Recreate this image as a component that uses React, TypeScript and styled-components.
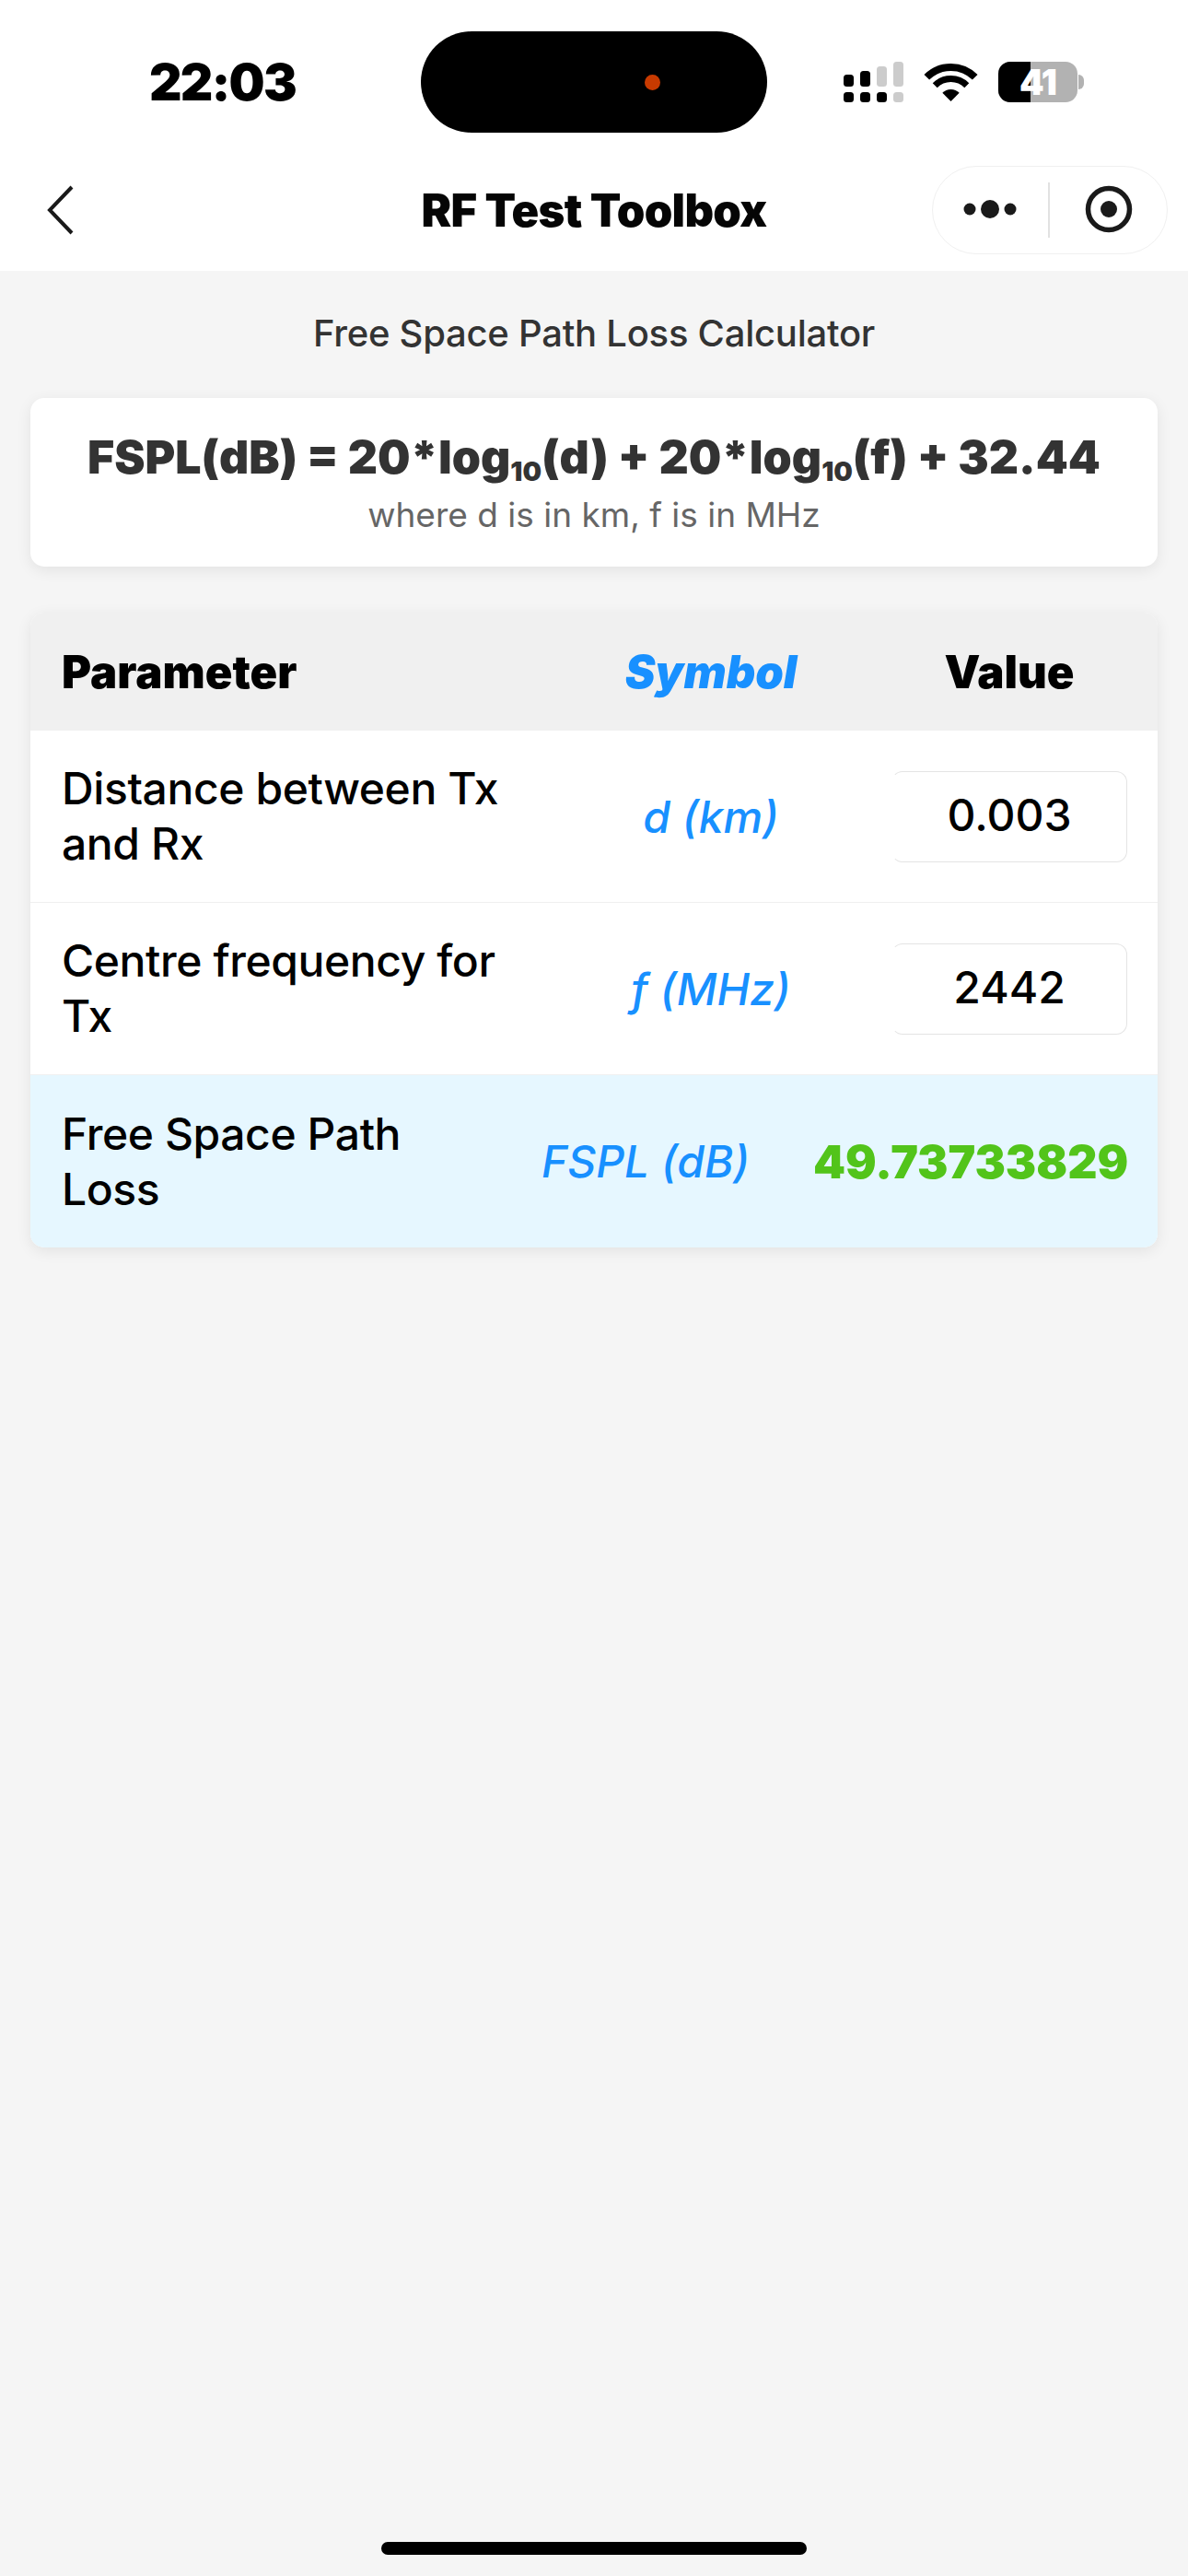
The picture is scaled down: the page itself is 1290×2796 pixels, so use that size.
import React from "react";
import styled, {createGlobalStyle} from "styled-components";

const GlobalStyle = createGlobalStyle`
  * {
    box-sizing: border-box;
  }
  body {
    margin: 0;
    background: #f5f5f5;
    font-family: Inter, "Liberation Sans", sans-serif;
    color: #000;
  }
`;

const Page = styled.div`
  width: 1290px;
  min-height: 2796px;
  display: flex;
  flex-direction: column;
`;

const TopArea = styled.header`
  background: #fff;
  height: 294px;
`;

const StatusBar = styled.div`
  height: 162px;
  padding-top: 34px;
  display: flex;
  align-items: flex-start;
`;

const Time = styled.div`
  width: 457px;
  height: 110px;
  padding-left: 26px;
  display: flex;
  align-items: center;
  justify-content: center;
  font-size: 55px;
  font-weight: 900;
  letter-spacing: -1.7px;
`;

const Island = styled.div`
  width: 376px;
  height: 110px;
  border-radius: 55px;
  background: #000;
  display: flex;
  align-items: center;
  justify-content: flex-end;
  padding-right: 116px;
`;

const IslandDot = styled.span`
  width: 17px;
  height: 17px;
  border-radius: 50%;
  background: #c83a00;
`;

const StatusIcons = styled.div`
  height: 110px;
  margin-left: 83px;
  display: flex;
  align-items: center;
`;

const WifiIcon = styled.svg`
  margin-left: 22px;
`;

const Battery = styled.div`
  position: relative;
  margin-left: 22px;
  width: 86px;
  height: 44px;
  border-radius: 13px;
  overflow: hidden;
  background: #b2b2b2;
  display: flex;
  align-items: center;
  justify-content: center;
  color: #fff;
  font-size: 38px;
  line-height: 40px;
  font-weight: 900;
  letter-spacing: -1px;
  span {
    position: relative;
  }
  &::before {
    content: "";
    position: absolute;
    top: 0;
    left: 0;
    bottom: 0;
    width: 35px;
    background: #000;
  }
`;

const BatteryNub = styled.span`
  width: 6px;
  height: 16px;
  margin-left: 1px;
  border-radius: 0 8px 8px 0;
  background: #b2b2b2;
`;

const NavBar = styled.nav`
  height: 132px;
  display: grid;
  grid-template-columns: 1fr auto 1fr;
  align-items: center;
`;

const BackIcon = styled.svg`
  margin-left: 50px;
`;

const NavTitle = styled.h1`
  margin: 0;
  font-size: 49px;
  font-weight: 900;
  letter-spacing: -.7px;
  color: #050505;
`;

const Capsule = styled.div`
  justify-self: end;
  margin-right: 22px;
  width: 256px;
  height: 96px;
  border: 1.5px solid #f0f0f0;
  border-radius: 48px;
  background: #fff;
  display: flex;
  align-items: center;
`;

const Main = styled.main`
  flex: 1;
  padding: 0 33px;
`;

const PageTitle = styled.h2`
  margin: 0;
  height: 138px;
  padding-bottom: 4px;
  display: flex;
  align-items: center;
  justify-content: center;
  font-size: 40px;
  font-weight: 500;
  letter-spacing: -.25px;
  color: #333;
`;

const FormulaCard = styled.section`
  height: 183px;
  background: #fff;
  border-radius: 15px;
  box-shadow: 0 4px 16px rgba(0, 0, 0, .08);
  display: flex;
  flex-direction: column;
  align-items: center;
  padding-top: 32px;
`;

const Formula = styled.div`
  font-size: 50px;
  line-height: 64px;
  font-weight: 900;
  color: #333;
  letter-spacing: 0;
  white-space: nowrap;
  sub {
    font-size: 29px;
    line-height: 0;
    vertical-align: -8px;
  }
`;

const FormulaNote = styled.div`
  margin-top: 7px;
  font-size: 37px;
  line-height: 48px;
  color: #666;
`;

const Table = styled.section`
  margin-top: 50px;
  border-radius: 15px;
  overflow: hidden;
  background: #fff;
  box-shadow: 0 4px 16px rgba(0, 0, 0, .08);
`;

const Row = styled.div<{ $result?: boolean }>`
  display: grid;
  grid-template-columns: ${props => props.$result ? "1fr 250px 341px" : "1fr 320px 256px"};
  column-gap: ${props => props.$result ? "57px" : "36px"};
  align-items: center;
  height: 187px;
  padding: 0 33px 0 34px;
  background: ${props => props.$result ? "#e6f7ff" : "#fff"};
  border-bottom: 1px solid #f0f0f0;
  &:last-child {
    border-bottom: 0;
  }
`;

const HeaderRow = styled(Row)`
  height: 128px;
  background: #f0f0f0;
  border-bottom: 0;
`;

const HeaderCell = styled.div<{ $accent?: boolean; $center?: boolean }>`
  font-size: 49px;
  font-weight: 900;
  letter-spacing: 0;
  color: ${props => props.$accent ? "#1890ff" : "#000"};
  font-style: ${props => props.$accent ? "italic" : "normal"};
  text-align: ${props => props.$center ? "center" : "left"};
`;

const Label = styled.div`
  font-size: 48px;
  line-height: 60px;
  font-weight: 500;
  letter-spacing: -.4px;
  color: #000;
`;

const SymbolCell = styled.div`
  font-size: 48px;
  font-style: italic;
  font-weight: 500;
  color: #1890ff;
  text-align: center;
  white-space: nowrap;
`;

const ValueBox = styled.div`
  height: 99px;
  border: 1.5px solid #e4e4e4;
  border-left-color: transparent;
  border-radius: 12px;
  display: flex;
  align-items: center;
  justify-content: center;
  font-size: 48px;
  font-weight: 500;
  padding-bottom: 3px;
`;

const ResultValue = styled.div`
  font-size: 50px;
  font-weight: 900;
  letter-spacing: 0;
  color: #52c41a;
  text-align: right;
  white-space: nowrap;
`;

const HomeBar = styled.div`
  align-self: center;
  width: 462px;
  height: 14px;
  margin-bottom: 23px;
  border-radius: 7px;
  background: #000;
`;

const SignalIcon: React.FC = () => (
    <svg width="65" height="44" viewBox="0 0 65 44">
        <rect x="0" y="14" width="11" height="13" rx="3.5" fill="#000"/>
        <rect x="18" y="10" width="11" height="17" rx="3.5" fill="#000"/>
        <rect x="36" y="5" width="11" height="22" rx="3.5" fill="#ccc"/>
        <rect x="54" y="0" width="11" height="27" rx="3.5" fill="#ccc"/>
        <rect x="0" y="33" width="11" height="11" rx="3.5" fill="#000"/>
        <rect x="18" y="33" width="11" height="11" rx="3.5" fill="#000"/>
        <rect x="36" y="33" width="11" height="11" rx="3.5" fill="#000"/>
        <rect x="54" y="33" width="11" height="11" rx="3.5" fill="#ccc"/>
    </svg>
);

const MoreIcon: React.FC = () => (
    <svg width="128" height="92" viewBox="0 0 128 92">
        <circle cx="40" cy="45" r="6.5" fill="#1a1a1a"/>
        <circle cx="62" cy="45" r="10" fill="#1a1a1a"/>
        <circle cx="84" cy="45" r="6.5" fill="#1a1a1a"/>
        <line x1="126" y1="16" x2="126" y2="76" stroke="#e2e2e2" strokeWidth="2"/>
    </svg>
);

const RecordIcon: React.FC = () => (
    <svg width="124" height="92" viewBox="0 0 124 92">
        <circle cx="63" cy="45" r="22.5" fill="none" stroke="#1a1a1a" strokeWidth="5.5"/>
        <circle cx="63" cy="45" r="9" fill="#1a1a1a"/>
    </svg>
);

const App: React.FC = () => {
    return (
        <Page>
            <GlobalStyle/>
            <TopArea>
                <StatusBar>
                    <Time>22:03</Time>
                    <Island>
                        <IslandDot/>
                    </Island>
                    <StatusIcons>
                        <SignalIcon/>
                        <WifiIcon width="59" height="42" viewBox="0 0 59 42">
                            <path d="M3.3 15.8 A37 37 0 0 1 55.7 15.8" fill="none" stroke="#000" strokeWidth="8"/>
                            <path d="M12.2 24.7 A24.5 24.5 0 0 1 46.8 24.7" fill="none" stroke="#000" strokeWidth="7"/>
                            <path d="M20.3 32.8 A13 13 0 0 1 38.7 32.8 L29.5 42 Z" fill="#000"/>
                        </WifiIcon>
                        <Battery><span>41</span></Battery>
                        <BatteryNub/>
                    </StatusIcons>
                </StatusBar>
                <NavBar>
                    <BackIcon width="32" height="54" viewBox="0 0 32 54">
                        <path d="M28 2 L4 27 L28 52" fill="none" stroke="#1a1a1a" strokeWidth="4"/>
                    </BackIcon>
                    <NavTitle>RF Test Toolbox</NavTitle>
                    <Capsule>
                        <MoreIcon/>
                        <RecordIcon/>
                    </Capsule>
                </NavBar>
            </TopArea>
            <Main>
                <PageTitle>Free Space Path Loss Calculator</PageTitle>
                <FormulaCard>
                    <Formula>FSPL(dB) = 20*log<sub>10</sub>(d) + 20*log<sub>10</sub>(f) + 32.44</Formula>
                    <FormulaNote>where d is in km, f is in MHz</FormulaNote>
                </FormulaCard>
                <Table>
                    <HeaderRow>
                        <HeaderCell>Parameter</HeaderCell>
                        <HeaderCell $accent $center>Symbol</HeaderCell>
                        <HeaderCell $center>Value</HeaderCell>
                    </HeaderRow>
                    <Row>
                        <Label>Distance between Tx<br/>and Rx</Label>
                        <SymbolCell>d (km)</SymbolCell>
                        <ValueBox>0.003</ValueBox>
                    </Row>
                    <Row>
                        <Label>Centre frequency for<br/>Tx</Label>
                        <SymbolCell>f (MHz)</SymbolCell>
                        <ValueBox>2442</ValueBox>
                    </Row>
                    <Row $result>
                        <Label>Free Space Path<br/>Loss</Label>
                        <SymbolCell>FSPL (dB)</SymbolCell>
                        <ResultValue>49.73733829</ResultValue>
                    </Row>
                </Table>
            </Main>
            <HomeBar/>
        </Page>
    );
};

export default App;
